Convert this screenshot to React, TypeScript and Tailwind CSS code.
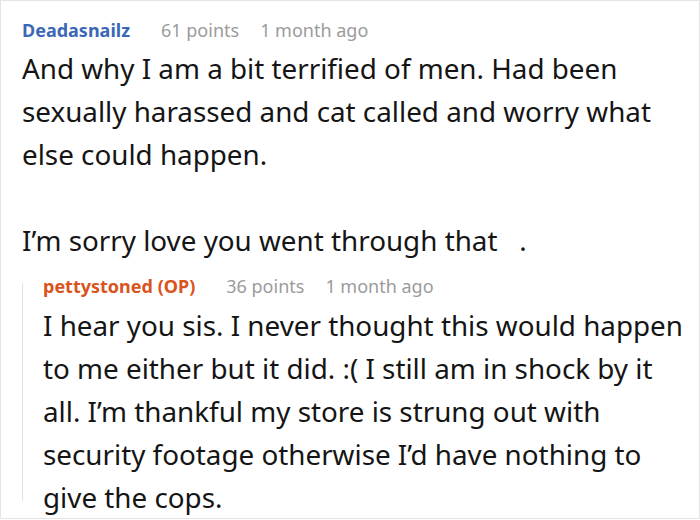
import React from 'react';

// ─── Types ────────────────────────────────────────────────────
interface MetaProps {
  author: string;
  points: number;
  age: string;
  op?: boolean;
}

// ─── Comment header ───────────────────────────────────────────
function CommentMeta({ author, points, age, op = false }: MetaProps) {
  return (
    <div className="flex items-baseline text-[18px] leading-[24px]">
      <span className={`font-bold ${op ? 'text-[#d9531c]' : 'text-[#3b68b6]'}`}>
        {author}
        {op && ' (OP)'}
      </span>
      <span className="ml-[31px] text-[#9b9b9b]">{points} points</span>
      <span className="ml-[21px] text-[#9b9b9b]">{age}</span>
    </div>
  );
}

// ─── App ──────────────────────────────────────────────────────
export default function App() {
  return (
    <div
      className="w-[700px] h-[519px] bg-white border border-[#e4e4e4] pl-[21px] pr-[4px] pt-[17px] text-[#151515] overflow-hidden"
      style={{ fontFamily: '"Noto Sans", "Open Sans", sans-serif' }}
    >
      <CommentMeta author="Deadasnailz" points={61} age="1 month ago" />
      <p className="mt-[5px] text-[27.8px] leading-[43px]">
        And why I am a bit terrified of men. Had been sexually harassed and cat called and worry
        what else could happen.
      </p>
      <p className="text-[27.8px] leading-[43px] mt-[43px] whitespace-pre">
        I’m sorry love you went through that{'   '}.
      </p>

      {/* reply */}
      <div className="relative mt-[12px] pl-[21px]">
        <span className="absolute left-0 top-[9px] bottom-[18px] w-px bg-[#e4e4e4]" />
        <CommentMeta author="pettystoned" points={36} age="1 month ago" op />
        <p className="mt-[6px] text-[27.8px] leading-[43px]">
          I hear you sis. I never thought this would happen to me either but it did. :( I still
          am in shock by it all. I’m thankful my store is strung out with security footage
          otherwise I’d have nothing to give the cops.
        </p>
      </div>
    </div>
  );
}
